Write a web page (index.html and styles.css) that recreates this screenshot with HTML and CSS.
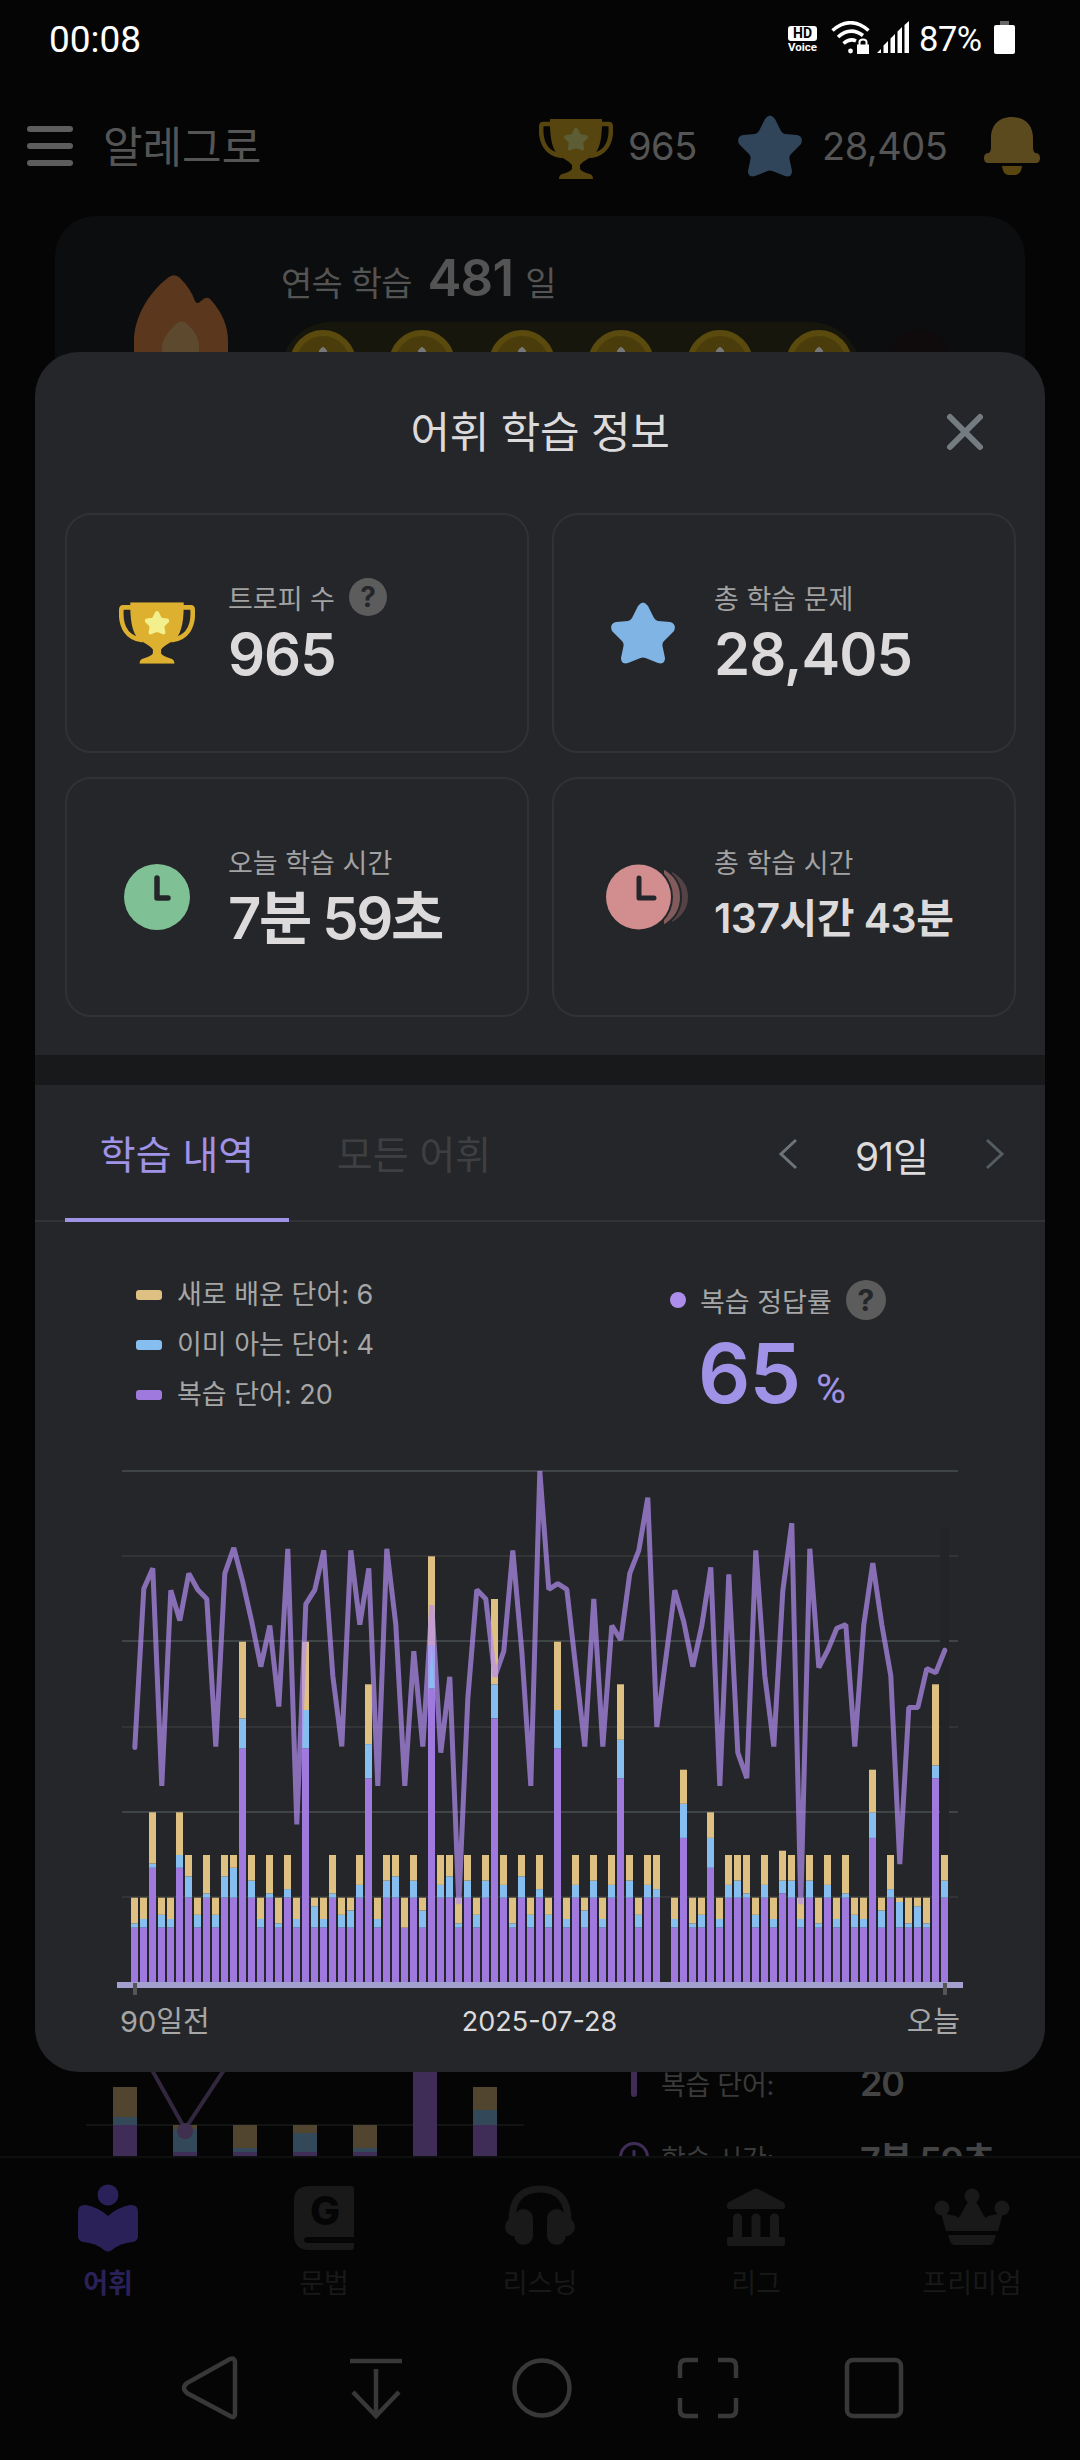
FILE: index.html
```html
<!DOCTYPE html>
<html lang="ko">
<head>
    <meta charset="UTF-8">
    <meta name="viewport" content="width=device-width, initial-scale=1.0">
    <title>어휘 학습 정보</title>
    <link rel="stylesheet" href="styles.css">
</head>
<body>
    <!-- shared shapes -->
    <svg class="defs" width="0" height="0">
        <symbol id="star" viewBox="0 0 64 62">
            <path d="M27 4Q32-3 37 4L43 16Q44.500 18.500 47 19L59 20Q66 22 63 29L53 39Q51 41 51.500 44L54 56Q54 63 47 61L34.500 56Q32 55 29.500 56L17 61Q10 63 10 56L12.500 44Q13 41 11 39L1 29Q-2 22 5 20L17 19Q19.500 18.500 21 16Z" fill="currentColor"/>
        </symbol>
        <symbol id="trophy" viewBox="0 0 74 60">
            <path d="M12 5H4Q2.500 5 2.300 7C1 24 8 35 23 37M62 5H70Q71.500 5 71.700 7C73 24 66 35 51 37" fill="none" stroke="currentColor" stroke-width="4.600"/>
            <path d="M11 0H63V4C63 21 60 34 52 38Q43 43 41 46V50Q43 53 51 55Q54 56 54 60H20Q20 56 23 55Q31 53 33 50V46Q31 43 22 38C14 34 11 21 11 4Z" fill="currentColor"/>
            <use href="#star" class="trophy-star" x="25" y="8" width="24" height="24"/>
        </symbol>
    </svg>

    <div class="status-bar">
        <span class="time">00:08</span>
        <div class="status-icons">
            <div class="hd"><b>HD</b><span>Voice</span></div>
            <svg class="wifi" width="40" height="33" viewBox="0 0 40 33">
                <g fill="none" stroke="#fff" stroke-width="3.600">
                    <path d="M1.500 9.500Q19.500-6 37.500 9.500"/>
                    <path d="M7 16Q19.500 5 32 14.500"/>
                    <path d="M12.500 22.500Q19 17 25 20"/>
                </g>
                <circle cx="19.500" cy="30" r="2.400" fill="#fff"/>
                <path d="M26 23.500H38V33H26Z" fill="#fff"/>
                <path d="M28.500 24V21Q28.500 18.500 32 18.500T35.500 21V24" fill="none" stroke="#fff" stroke-width="2"/>
            </svg>
            <svg width="34" height="33" viewBox="0 0 34 33" fill="#fff">
                <path d="M1 32L5 28V32ZM7.500 32V24.500L12 20V32ZM14.500 32V17.500L19 13V32ZM21.500 32V10.500L26 6V32ZM28.500 32V4L33 0V32Z"/>
            </svg>
            <span class="percent">87%</span>
            <svg width="22" height="33" viewBox="0 0 22 33">
                <rect x="6" width="9" height="5" fill="#666"/>
                <rect y="4" width="21" height="29" rx="2" fill="#fff"/>
            </svg>
        </div>
    </div>

    <header class="app-header">
        <div class="burger"><i></i><i></i><i></i></div>
        <span class="app-name">알레그로</span>
        <svg class="head-trophy" width="74" height="60"><use href="#trophy"/></svg>
        <span class="head-num">965</span>
        <svg class="head-star" width="64" height="62"><use href="#star"/></svg>
        <span class="head-num wide">28,405</span>
        <svg class="bell" width="56" height="59" viewBox="0 0 56 59">
            <path d="M28 0C42 0 49 9 49 21V31Q49 34 51 36Q56 36 56 41Q56 46 52 46H4Q0 46 0 41Q0 36 5 36Q7 34 7 31V21C7 9 14 0 28 0Z" fill="#5c4a1f"/>
            <path d="M18 49H38Q37 58 31 58H25Q19 58 18 49Z" fill="#5a470f"/>
        </svg>
    </header>

    <main class="home">
        <section class="streak">
            <svg class="flame" width="96" height="100" viewBox="0 0 96 100">
                <path d="M0 66C0 40 18 14 35 2Q41-2 46 3Q57 14 61 26Q63 30 67 26Q73 20 77 25Q94 44 94 66V100H0Z" fill="#5b371d"/>
                <path d="M28 72Q28 62 42 49Q47 44 52 48Q65 59 65 72V100H28Z" fill="#5d4a2e"/>
            </svg>
            <div class="streak-body">
                <p class="streak-text">연속 학습 <b>481</b><span>일</span></p>
                <div class="coins">
                    <i></i><i></i><i></i><i></i><i></i><i></i><i class="off"></i>
                </div>
            </div>
        </section>

        <section class="words">
            <svg class="mini-chart" width="440" height="84" viewBox="0 0 440 84">
                <path d="M0 53H438" stroke="#111413" stroke-width="2"/>
                <g fill="#51452f">
                    <path d="M27 15h24v30h-24zM87 53h24v4h-24zM147 53h24v23h-24zM207 53h24v8h-24zM267 53h24v23h-24zM387 15h24v23h-24z"/>
                </g>
                <g fill="#334858">
                    <path d="M27 45h24v8h-24zM87 57h24v23h-24zM147 76h24v4h-24zM207 61h24v19h-24zM267 76h24v4h-24zM387 38h24v15h-24z"/>
                </g>
                <g fill="#3f2d57">
                    <path d="M27 53h24v31h-24zM87 80h24v4h-24zM147 80h24v4h-24zM207 80h24v4h-24zM267 80h24v4h-24zM327 0h24v84h-24zM387 53h24v31h-24z"/>
                </g>
                <path d="M66-2L99 57L138-2" fill="none" stroke="#33273f" stroke-width="4"/>
                <circle cx="99" cy="59" r="8" fill="#40304f"/>
            </svg>
            <div class="today">
                <div class="today-row">
                    <span class="today-icon"><i></i></span>
                    <span class="today-label">복습 단어:</span><b>20</b>
                </div>
                <div class="today-row">
                    <span class="today-icon">
                        <svg width="30" height="30" viewBox="0 0 30 30" fill="none" stroke="#3f2d57" stroke-width="3">
                            <circle cx="15" cy="15" r="13.500"/><path d="M15 8V16H20"/>
                        </svg>
                    </span>
                    <span class="today-label">학습 시간:</span><b>7분 59초</b>
                </div>
            </div>
        </section>
    </main>

    <nav class="tabbar">
        <div class="nav-item active">
            <svg width="80" height="70" viewBox="0 0 80 70" fill="currentColor">
                <circle cx="40" cy="12" r="10.500"/>
                <path d="M40 33Q50 24 62 22Q70 21 70 29V53Q70 58 65 59Q52 60 44 67Q40 70 36 67Q28 60 15 59Q10 58 10 53V29Q10 21 18 22Q30 24 40 33Z"/>
            </svg>
            <span>어휘</span>
        </div>
        <div class="nav-item">
            <svg width="80" height="70" viewBox="0 0 80 70">
                <path d="M24 3H67Q70 3 70 6V54H24Q20 54 20 57T24 60H70V64Q70 67 67 67H24Q10 66 10 52V17Q10 4 24 3Z" fill="currentColor"/>
                <text x="41" y="42" class="book-g">G</text>
            </svg>
            <span>문법</span>
        </div>
        <div class="nav-item">
            <svg width="80" height="70" viewBox="0 0 80 70" fill="currentColor">
                <path d="M12 38C12 16 22 6 40 6S68 16 68 38" fill="none" stroke="currentColor" stroke-width="7"/>
                <rect x="14" y="26" width="19" height="36" rx="9.500"/>
                <rect x="47" y="26" width="19" height="36" rx="9.500"/>
                <path d="M16 36H10Q5 38 5 44T12 53H16ZM64 36H70Q75 38 75 44T68 53H64Z"/>
            </svg>
            <span>리스닝</span>
        </div>
        <div class="nav-item">
            <svg width="80" height="70" viewBox="0 0 80 70" fill="currentColor">
                <path d="M36 7Q40 4 44 7L67 19Q69 20 69 22V24Q69 26 67 26H13Q11 26 11 24V22Q11 20 13 19Z"/>
                <path d="M17 54V35a4.500 4.500 0 0 1 9 0V54H35.500V35a4.500 4.500 0 0 1 9 0V54H54V35a4.500 4.500 0 0 1 9 0V54H67Q69 54 69 56V61Q69 63 67 63H13Q11 63 11 61V56Q11 54 13 54Z"/>
            </svg>
            <span>리그</span>
        </div>
        <div class="nav-item">
            <svg width="80" height="70" viewBox="0 0 80 70" fill="currentColor">
                <circle cx="10" cy="25" r="7.500"/><circle cx="40" cy="13" r="7.500"/><circle cx="70" cy="25" r="7.500"/>
                <path d="M9 30L24 33Q26 36 28 33L37 17H43L52 33Q54 36 56 33L71 30L66 48H14ZM16 52H64L62 58Q61 62 57 62H23Q19 62 18 58Z"/>
            </svg>
            <span>프리미엄</span>
        </div>
    </nav>

    <div class="system-nav">
        <svg viewBox="0 0 64 64"><path d="M52 3Q57 1 57 7V57Q57 63 52 60L9 37Q3 32 9 27Z"/></svg>
        <svg viewBox="0 0 64 64"><path d="M6 5H58M32 13V60M9 36L32 60L55 36"/></svg>
        <svg viewBox="0 0 64 64"><circle cx="32" cy="32" r="27.500"/></svg>
        <svg viewBox="0 0 64 64"><path d="M4 22V10Q4 4 10 4H22M42 4H54Q60 4 60 10V22M60 42V54Q60 60 54 60H42M22 60H10Q4 60 4 54V42"/></svg>
        <svg viewBox="0 0 64 64"><rect x="5" y="4" width="54" height="56" rx="6"/></svg>
    </div>

    <div class="modal">
        <div class="modal-head">
            <h1>어휘 학습 정보</h1>
            <svg class="close" width="40" height="40" viewBox="0 0 40 40">
                <path d="M5 5L35 35M35 5L5 35"/>
            </svg>
        </div>

        <div class="cards">
            <div class="card">
                <svg class="trophy" width="76" height="62" viewBox="0 0 74 60"><use href="#trophy"/></svg>
                <div class="card-text">
                    <div class="label">트로피 수 <span class="help">?</span></div>
                    <div class="value">965</div>
                </div>
            </div>
            <div class="card">
                <svg class="blue-star" width="64" height="62"><use href="#star"/></svg>
                <div class="card-text">
                    <div class="label">총 학습 문제</div>
                    <div class="value">28,405</div>
                </div>
            </div>
            <div class="card">
                <svg class="clock" width="66" height="66" viewBox="0 0 66 66">
                    <circle cx="33" cy="33" r="33" fill="#80c095"/>
                    <path d="M33 14V34H44" fill="none" stroke="#24272a" stroke-width="5.500" stroke-linecap="round" stroke-linejoin="round"/>
                </svg>
                <div class="card-text">
                    <div class="label">오늘 학습 시간</div>
                    <div class="value time-value">7분 59초</div>
                </div>
            </div>
            <div class="card">
                <svg class="clock-all" width="82" height="66" viewBox="0 0 82 66">
                    <path d="M66 8Q82 17 82 33T66 58Z" fill="#544244"/>
                    <path d="M57 4Q75 14 75 33T57 62Z" fill="#825b5d" stroke="#24272a" stroke-width="2"/>
                    <circle cx="32.500" cy="33" r="34.500" fill="#24272a"/>
                    <circle cx="32.500" cy="33" r="32.500" fill="#d28e8f"/>
                    <path d="M33 14V34H48" fill="none" stroke="#24272a" stroke-width="5" stroke-linecap="round" stroke-linejoin="round"/>
                </svg>
                <div class="card-text">
                    <div class="label">총 학습 시간</div>
                    <div class="value small">137시간 43분</div>
                </div>
            </div>
        </div>

        <div class="divider"></div>

        <div class="tabs">
            <div class="tab on">학습 내역</div>
            <div class="tab">모든 어휘</div>
            <div class="period">
                <svg width="24" height="36" viewBox="0 0 24 36"><path d="M19 4L4 18L19 32"/></svg>
                <span>91일</span>
                <svg class="next" width="24" height="36" viewBox="0 0 24 36"><path d="M5 4L20 18L5 32"/></svg>
            </div>
        </div>

        <div class="summary">
            <ul class="legend">
                <li><i class="new"></i>새로 배운 단어: 6</li>
                <li><i class="known"></i>이미 아는 단어: 4</li>
                <li><i class="review"></i>복습 단어: 20</li>
            </ul>
            <div class="rate">
                <div class="rate-label"><i></i>복습 정답률<span class="help big">?</span></div>
                <div class="rate-value">65<small>%</small></div>
            </div>
        </div>

        <svg class="chart" id="chart" width="850" height="530" viewBox="0 0 850 530"></svg>
        <div class="axis"><span>90일전</span><span class="date">2025-07-28</span><span class="last">오늘</span></div>
    </div>

    <script>
        // [review, known, new] words per day, oldest first
        const days = [
            [13,1,6],[13,2,5],[27,1,12],[13,3,4],[13,2,5],[27,3,10],[20,5,5],[13,3,4],[20,1,9],[13,3,4],
            [20,5,5],[20,7,3],[55,7,18],[20,4,6],[13,2,5],[20,1,9],[13,1,6],[20,2,8],[13,2,5],[55,9,16],
            [13,5,2],[13,2,5],[20,1,9],[13,3,4],[13,4,3],[20,3,7],[48,8,14],[13,2,5],[20,4,6],[20,5,5],
            [13,0,7],[20,4,6],[13,4,3],[69,10,21],[20,3,7],[20,5,5],[13,1,6],[20,4,6],[13,3,4],[20,4,6],
            [62,8,20],[20,3,7],[13,1,6],[20,5,5],[13,3,4],[20,2,8],[13,3,4],[55,9,16],[13,2,5],[20,3,7],
            [13,4,3],[20,4,6],[13,2,5],[20,3,7],[48,9,13],[20,4,6],[13,3,4],[20,3,7],[20,2,8],[0,0,0],
            [13,2,5],[34,8,8],[13,1,6],[13,3,4],[27,7,6],[13,2,5],[20,3,7],[20,4,6],[20,1,9],[13,3,4],
            [20,3,7],[13,2,5],[21,3,7],[20,4,6],[13,2,5],[20,4,6],[13,1,6],[20,3,7],[13,2,5],[20,1,9],
            [13,3,4],[13,2,5],[34,6,10],[13,4,3],[20,2,8],[13,6,1],[13,1,6],[13,5,2],[13,1,6],[48,3,19],[20,4,6]
        ];
        // review accuracy in percent, null when nothing was reviewed
        const rates = [
            46,77,81,38.5,76.7,70.8,80,76.8,75,46.2,80,85,78.3,70.5,61.8,69.8,54,84.8,31,74,
            76.8,84.5,60,46.2,84.5,70,81,38.5,84.8,70,38.5,64.8,46.2,73.8,45,59.8,15.4,55.5,76.8,75,
            59.8,64.8,84.5,64.8,38.5,100,76.9,78,76.9,61.5,46.2,75,46.2,69.8,67,80,84.5,94.8,50,null,
            76.7,70.5,61.8,69.8,81.2,38.5,79.8,45,40,84.5,60,46.2,76.6,89.8,15.4,84.8,61.6,65,69.3,70,
            46.2,70,82,70,60,23.2,53.8,53.8,61.4,60.6,65
        ];

        const zero = 515;
        const unit = 512 / 120;
        let out = '';

        for (let i = 1; i <= 6; i++) {
            const y = Math.floor(zero - i * 20 * unit) - 1;
            out += `<rect class="${i % 2 ? 'grid-half' : 'grid'}" x="5" y="${y}" width="836" height="2"/>`;
        }
        out += '<rect class="selected" x="823" y="60" width="9" height="455"/>';

        days.forEach((day, i) => {
            let y = zero;
            ['review', 'known', 'new'].forEach((name, k) => {
                const h = day[k] * unit;
                y -= h;
                out += `<rect class="${name}" x="${14 + i * 9}" y="${y.toFixed(1)}" width="7" height="${h.toFixed(1)}"/>`;
            });
        });

        const points = rates
            .map((r, i) => r === null ? '' : `${17.8 + i * 9},${(zero - r * 5.12).toFixed(1)}`)
            .join(' ');
        out += `<polyline class="rate-line" points="${points}"/>`;
        out += '<rect class="baseline" x="0" y="514" width="846" height="6"/>';
        out += '<rect class="tick" x="16" y="515" width="4" height="12"/><rect class="tick" x="826" y="515" width="4" height="12"/>';

        document.getElementById('chart').innerHTML = out;
    </script>
</body>
</html>
```
FILE: styles.css
```css
* {
    box-sizing: border-box;
    margin: 0;
    padding: 0;
}

body {
    position: relative;
    width: 1080px;
    height: 2460px;
    overflow: hidden;
    background: #050505;
    color: #dcdadb;
    font-family: Inter, "Noto Sans CJK KR", sans-serif;
    display: flex;
    flex-direction: column;
}

.defs {
    position: absolute;
}

/* status bar */
.status-bar {
    height: 92px;
    padding: 21px 64px 0 49px;
    display: flex;
    justify-content: space-between;
    color: #fff;
    font-family: Roboto, sans-serif;
}

.time {
    font-size: 37px;
    line-height: 37px;
}

.status-icons {
    display: flex;
    height: 33px;
}

.hd {
    width: 29px;
    margin: 5px 14px 0 0;
    display: flex;
    flex-direction: column;
    align-items: center;
}

.hd b {
    width: 29px;
    height: 15px;
    border-radius: 3px;
    background: #fff;
    color: #000;
    font-size: 14px;
    line-height: 15px;
    text-align: center;
}

.hd span {
    font-size: 11.5px;
    font-weight: 700;
    line-height: 13px;
}

.wifi {
    margin-right: 5px;
}

.percent {
    width: 64px;
    margin: 0 11px 0 9px;
    font-size: 34.5px;
    line-height: 37px;
    letter-spacing: -0.5px;
}

/* header */
.app-header {
    height: 124px;
    padding-left: 27px;
    display: flex;
    align-items: flex-start;
    color: #555;
}

.burger {
    width: 46px;
    height: 40px;
    margin: 34px 30px 0 0;
    display: flex;
    flex-direction: column;
    justify-content: space-between;
}

.burger i {
    height: 6px;
    border-radius: 3px;
    background: #5d5d5d;
}

.app-name {
    width: 436px;
    margin-top: 29px;
    font-size: 43px;
    line-height: 52px;
}

.head-trophy {
    margin-top: 27px;
    color: #57450f;
}

.head-num {
    width: 110px;
    margin: 28px 0 0 15px;
    font-size: 38px;
    line-height: 52px;
    letter-spacing: -0.5px;
}

.head-num.wide {
    width: 144px;
    margin-left: 20px;
}

.head-star {
    margin-top: 23px;
    color: #30455a;
}

.bell {
    margin: 25px 0 0 18px;
}

/* home screen behind the dialog */
.home {
    height: 1940px;
    overflow: hidden;
}

.streak {
    height: 260px;
    margin: 0 55px;
    padding-left: 79px;
    border-radius: 40px;
    background: #0b0d0e;
    display: flex;
}

.flame {
    margin-top: 59px;
}

.streak-body {
    padding-left: 51px;
}

.streak-text {
    height: 106px;
    padding-top: 32px;
    color: #545454;
    font-size: 34px;
    line-height: 60px;
    letter-spacing: -0.8px;
    white-space: nowrap;
}

.streak-text b {
    margin: 0 12px 0 7px;
    font-size: 51px;
    font-weight: 600;
}

.coins {
    width: 580px;
    height: 100px;
    padding: 8px 0 0 9px;
    border-radius: 50px;
    background: #17160d;
    display: flex;
    gap: 33.300px;
}

.coins i {
    flex: none;
    width: 66px;
    height: 66px;
    border: 6px solid #5b4a0e;
    border-radius: 50%;
    background: radial-gradient(ellipse 5px 10px at 50% 21px, #77777a 95%, #4b3d0b);
}

.coins .off {
    border-color: #0f0b0c;
    background: #0f0b0c;
}

.words {
    height: 1680px;
    padding: 1596px 0 0 86px;
    display: flex;
}

.today {
    margin: -26px 0 0 92px;
}

.today-row {
    height: 74px;
    display: flex;
    align-items: center;
    color: #444;
}

.today-icon {
    width: 32px;
    display: flex;
    justify-content: center;
}

.today-icon i {
    width: 6px;
    height: 28px;
    border-radius: 3px;
    background: #3f2d57;
}

.today-label {
    width: 210px;
    padding-left: 11px;
    font-size: 27px;
    letter-spacing: -0.3px;
    color: #3a3a3a;
}

.today-row b {
    font-size: 36px;
    font-weight: 600;
    letter-spacing: -1.2px;
}

/* bottom navigation */
.tabbar {
    height: 164px;
    border-top: 2px solid #0d100f;
    display: flex;
    color: #191919;
}

.nav-item {
    width: 216px;
    padding-top: 25px;
    display: flex;
    flex-direction: column;
    align-items: center;
}

.nav-item span {
    margin-top: 11px;
    font-size: 27px;
    line-height: 40px;
}

.nav-item.active {
    color: #2b2159;
}

.nav-item.active span {
    font-weight: 700;
}

.book-g {
    fill: #050505;
    font-size: 40px;
    font-weight: 800;
    text-anchor: middle;
}

.system-nav {
    height: 140px;
    padding: 36px 0 0 178px;
    display: flex;
    gap: 102px;
}

.system-nav svg {
    width: 64px;
    height: 64px;
    fill: none;
    stroke: #383838;
    stroke-width: 4.500;
}

/* dialog */
.modal {
    position: absolute;
    top: 352px;
    left: 35px;
    width: 1010px;
    height: 1720px;
    border-radius: 44px;
    background: #242629;
}

.modal-head {
    position: relative;
    height: 161px;
    padding-top: 50px;
}

.modal-head h1 {
    font-size: 43px;
    font-weight: 400;
    line-height: 60px;
    letter-spacing: -0.3px;
    text-align: center;
}

.close {
    position: absolute;
    top: 60px;
    right: 60px;
    stroke: #747c82;
    stroke-width: 6;
    stroke-linecap: round;
}

.cards {
    padding: 0 29px 0 30px;
    display: grid;
    grid-template-columns: 1fr 1fr;
    grid-auto-rows: 240px;
    gap: 24px 23px;
}

.card {
    padding-left: 52px;
    border: 2px solid #303235;
    border-radius: 26px;
    display: flex;
    align-items: center;
}

.card svg {
    flex: none;
}

.trophy {
    --star: #f3ef8d;
    color: #deb02f;
    margin-right: 33px;
}

.trophy-star {
    color: var(--star, #5c5c35);
}

.blue-star {
    margin: 0 39px 0 5px;
    color: #7fb4e4;
}

.clock {
    margin: 0 38px 0 5px;
}

.clock-all {
    margin-right: 26px;
}

.card-text {
    padding-top: 2px;
}

.label {
    height: 40px;
    display: flex;
    align-items: center;
    color: #a2a2a3;
    font-size: 27px;
    white-space: nowrap;
}

.help {
    width: 38px;
    height: 38px;
    margin-left: 14px;
    border-radius: 50%;
    background: #5c5c5c;
    color: #242629;
    font-size: 28px;
    font-weight: 700;
    line-height: 38px;
    text-align: center;
}

.help.big {
    width: 40px;
    height: 40px;
    line-height: 40px;
    font-size: 30px;
}

.value {
    height: 74px;
    font-size: 58px;
    font-weight: 600;
    line-height: 74px;
    letter-spacing: -1px;
    white-space: nowrap;
}

.value.time-value {
    letter-spacing: -2.4px;
}

.value.small {
    font-size: 41px;
    letter-spacing: -0.5px;
}

.divider {
    height: 30px;
    margin-top: 38px;
    background: #18191b;
}

.tabs {
    height: 137px;
    padding: 0 39px 0 30px;
    border-bottom: 2px solid #313336;
    display: flex;
}

.tab {
    width: 250px;
    height: 137px;
    color: #3e3f41;
    font-size: 39px;
    line-height: 140px;
    text-align: center;
}

.tab.on {
    width: 224px;
    border-bottom: 4px solid #a092e6;
    color: #a092e6;
}

.period {
    margin-left: auto;
    padding-top: 2px;
    display: flex;
    align-items: center;
}

.period svg {
    fill: none;
    stroke: #6d757b;
    stroke-width: 3;
}

.period .next {
    stroke: #555c62;
}

.period span {
    width: 181px;
    font-size: 39px;
    letter-spacing: -1px;
    text-align: center;
}

.summary {
    height: 231px;
    padding: 48px 0 0 101px;
    display: flex;
}

.legend {
    width: 534px;
    list-style: none;
    color: #a6a6a7;
    font-size: 27px;
    line-height: 50px;
}

.legend li {
    height: 50px;
    display: flex;
    align-items: center;
}

.legend i {
    width: 26px;
    height: 10px;
    margin-right: 15px;
    border-radius: 3px;
}

i.new {
    background: #dfc083;
}

i.known {
    background: #86bef0;
}

i.review {
    background: #a079df;
}

.rate-label {
    height: 60px;
    display: flex;
    align-items: center;
    color: #a6a6a7;
    font-size: 27px;
}

.rate-label i {
    width: 16px;
    height: 16px;
    margin-right: 14px;
    border-radius: 50%;
    background: #ad8deb;
}

.rate-value {
    padding-left: 28px;
    color: #a092e6;
    font-size: 82px;
    font-weight: 600;
    line-height: 88px;
    letter-spacing: -1px;
}

.rate-value small {
    margin-left: 16px;
    font-family: Roboto, sans-serif;
    font-size: 41px;
    font-weight: 400;
}

/* chart */
.chart {
    display: block;
    margin: 15px 0 0 82px;
}

.grid {
    fill: #3f4447;
}

.grid-half {
    fill: #323436;
}

.selected {
    fill: #222426;
}

rect.new {
    fill: #dfc083;
}

rect.known {
    fill: #86bef0;
}

rect.review {
    fill: #a079df;
}

.rate-line {
    fill: none;
    stroke: #b48ff1;
    stroke-width: 5;
    stroke-linecap: round;
    stroke-linejoin: bevel;
    opacity: 0.7;
}

.baseline {
    fill: #a3a0d0;
}

.tick {
    fill: #555;
}

.axis {
    padding: 3px 85px 0 85px;
    display: grid;
    grid-template-columns: 1fr auto 1fr;
    align-items: center;
    color: #a6a6a7;
    font-size: 29px;
    line-height: 36px;
}

.axis .date {
    margin-right: 1px;
    color: #dcdadb;
    font-size: 27px;
    line-height: 42px;
}

.axis .last {
    text-align: right;
}
```
